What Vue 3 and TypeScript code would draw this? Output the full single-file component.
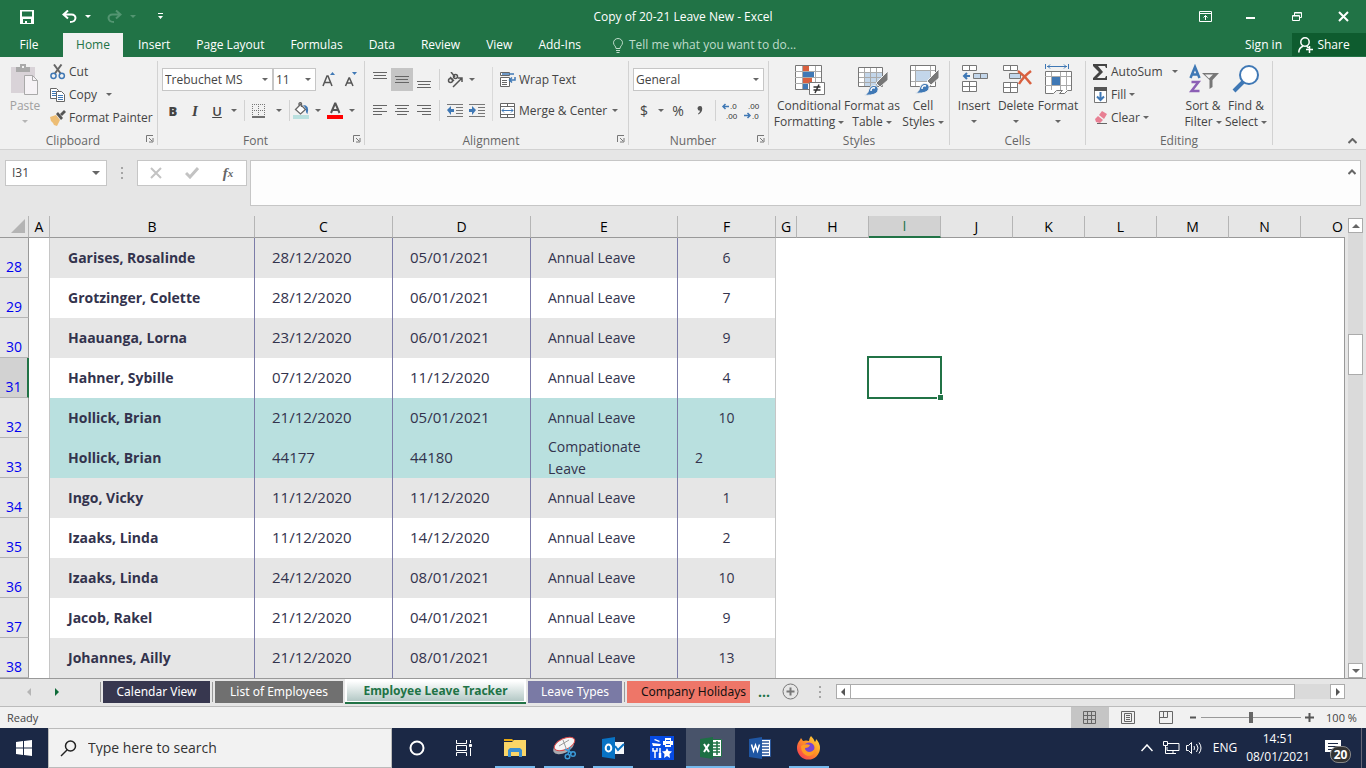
<script setup lang="ts">
import { ref } from 'vue'

interface LeaveRow {
  no: number
  name: string
  start: string
  end: string
  type: string
  days: string
  tone: 'grey' | 'white' | 'teal'
  daysLeft?: boolean
}

const rows: LeaveRow[] = [
  { no: 28, name: 'Garises, Rosalinde', start: '28/12/2020', end: '05/01/2021', type: 'Annual Leave', days: '6', tone: 'grey' },
  { no: 29, name: 'Grotzinger, Colette', start: '28/12/2020', end: '06/01/2021', type: 'Annual Leave', days: '7', tone: 'white' },
  { no: 30, name: 'Haauanga, Lorna', start: '23/12/2020', end: '06/01/2021', type: 'Annual Leave', days: '9', tone: 'grey' },
  { no: 31, name: 'Hahner, Sybille', start: '07/12/2020', end: '11/12/2020', type: 'Annual Leave', days: '4', tone: 'white' },
  { no: 32, name: 'Hollick, Brian', start: '21/12/2020', end: '05/01/2021', type: 'Annual Leave', days: '10', tone: 'teal' },
  { no: 33, name: 'Hollick, Brian', start: '44177', end: '44180', type: 'Compationate Leave', days: '2', tone: 'teal', daysLeft: true },
  { no: 34, name: 'Ingo, Vicky', start: '11/12/2020', end: '11/12/2020', type: 'Annual Leave', days: '1', tone: 'grey' },
  { no: 35, name: 'Izaaks, Linda', start: '11/12/2020', end: '14/12/2020', type: 'Annual Leave', days: '2', tone: 'white' },
  { no: 36, name: 'Izaaks, Linda', start: '24/12/2020', end: '08/01/2021', type: 'Annual Leave', days: '10', tone: 'grey' },
  { no: 37, name: 'Jacob, Rakel', start: '21/12/2020', end: '04/01/2021', type: 'Annual Leave', days: '9', tone: 'white' },
  { no: 38, name: 'Johannes, Ailly', start: '21/12/2020', end: '08/01/2021', type: 'Annual Leave', days: '13', tone: 'grey' },
]

const columns = ['A', 'B', 'C', 'D', 'E', 'F', 'G', 'H', 'I', 'J', 'K', 'L', 'M', 'N', 'O']
const emptyColumns = ['G', 'H', 'I', 'J', 'K', 'L', 'M', 'N', 'O']
const menuTabs = ['Insert', 'Page Layout', 'Formulas', 'Data', 'Review', 'View', 'Add-Ins']

const cellName = ref('I31')
const formula = ref('')
const fontName = ref('Trebuchet MS')
const fontSize = ref('11')
const numberFormat = ref('General')
const zoom = ref(50)
const query = ref('')
</script>

<template>
  <div class="app">
    <header class="title-bar">
      <div class="quick">
        <button class="q-save" aria-label="Save">
          <svg width="14" height="14" viewBox="0 0 14 14"><path fill="#fff" fill-rule="evenodd" d="M0 0h14v14H0zM2 1.500v5h10v-5zM3 9v4h2v-2h2v2h4V9z" /></svg>
        </button>
        <button class="q-undo" aria-label="Undo">
          <svg width="15" height="13" viewBox="0 0 15 13" fill="none" stroke="#fff" stroke-width="2"><path d="M6 0.500L1.500 4.500L6 8.500M2 4.500H9.500C15 4.500 15 12 8 12" /></svg>
        </button>
        <i class="caret light"></i>
        <button class="q-redo" aria-label="Redo">
          <svg width="15" height="13" viewBox="0 0 15 13" fill="none" stroke="#539571" stroke-width="2"><path d="M9 0.500L13.500 4.500L9 8.500M13 4.500H5.500C0 4.500 0 12 7 12" /></svg>
        </button>
        <i class="caret faded"></i>
        <button class="q-more" aria-label="Customize Quick Access Toolbar">
          <svg width="7" height="8" viewBox="0 0 7 8"><path fill="#fff" d="M1 0h5v1H1zM1 3h5L3.500 6z" /></svg>
        </button>
      </div>
      <h1>Copy of 20-21 Leave New - Excel</h1>
      <div class="window-controls">
        <button aria-label="Ribbon Display Options">
          <svg width="13" height="11" viewBox="0 0 13 11" fill="none" stroke="#fff"><path d="M.5.5h12v10H.5zM.5 2.500h12M6.500 9V4.500M4.500 6.500l2-2 2 2" /></svg>
        </button>
        <button aria-label="Minimize"><svg width="10" height="11" viewBox="0 0 10 11"><path fill="#fff" d="M0 6h9v2H0z" /></svg></button>
        <button aria-label="Restore">
          <svg width="11" height="11" viewBox="0 0 11 11" fill="none" stroke="#fff"><path d="M.5 4.500h7v5h-7zM.5 5h7M2.500 4V1.500h7v5H8M2.500 2h7" /></svg>
        </button>
        <button aria-label="Close"><svg width="11" height="11" viewBox="0 0 11 11"><path stroke="#fff" stroke-width="2" d="M1 1l9 9M10 1l-9 9" /></svg></button>
      </div>
    </header>

    <nav class="menu">
      <button class="file">File</button>
      <button class="home">Home</button>
      <button v-for="tab in menuTabs" :key="tab" class="menu-tab">{{ tab }}</button>
      <button class="tell">
        <svg width="12" height="15" viewBox="0 0 12 15" fill="none" stroke="#bfdccb"><path d="M4 10.500C4 8 1.500 7.500 1.500 4.800a4.500 4.300 0 0 1 9 0C10.500 7.500 8 8 8 10.500zM4 12.500h4M4.500 14.500h3" /></svg>
        Tell me what you want to do...
      </button>
      <span class="spacer"></span>
      <button class="sign">Sign in</button>
      <button class="share">
        <svg width="15" height="16" viewBox="0 0 15 16" fill="none" stroke="#fff" stroke-width="1.500"><circle cx="7" cy="5" r="4.200" /><path d="M.8 15.500c0-3.500 2-5.500 4.500-6.500M8.500 9l2 2M8 12.500h7M11.500 9v7" /></svg>
        Share
      </button>
    </nav>

    <section class="ribbon">
      <div class="group g-clipboard">
        <div class="body">
          <button class="big paste">
            <svg width="30" height="32" viewBox="0 0 30 32"><path fill="#d9d3d8" d="M1 3h24v26H1z" /><path fill="#a9a9a9" d="M6 3h4V0h6v3h4v5H6z" /><path fill="#f1f1f1" d="M12 2h2v2h-2z" /><path fill="#f6f3f6" stroke="#a9a9a9" d="M14.500 11.500h8l5 5v14h-13z" /><path fill="none" stroke="#a9a9a9" d="M22.500 11.500v5h5" /></svg>
            <span>Paste</span><i class="caret pale"></i>
          </button>
          <div class="stack">
            <button>
              <svg width="16" height="16" viewBox="0 0 16 16" fill="none"><path stroke="#666" stroke-width="2" d="M4 0.500l7 9.500M11.500 0.500l-7 9.500" /><circle cx="3.500" cy="11.800" r="2.600" stroke="#3f78b5" stroke-width="1.500" /><circle cx="11.800" cy="11.800" r="2.600" stroke="#3f78b5" stroke-width="1.500" /></svg>Cut
            </button>
            <button>
              <svg width="16" height="16" viewBox="0 0 16 16" fill="#fff" stroke="#666"><path d="M.5 1.500h6l2 2v8h-8z" /><path stroke="#3f78b5" d="M2 4.500h4M2 6.500h4M2 8.500h4" /><path d="M6.500 4.500h5l3 3v7h-8z" /><path stroke="#3f78b5" d="M8 8.500h5M8 10.500h5M8 12.500h5" /></svg>Copy<i class="caret wide"></i>
            </button>
            <button>
              <svg width="16" height="16" viewBox="0 0 16 16"><path fill="#edbd74" d="M0 7l6-2 4 5-3 6-3-1-1-2-2-2z" /><path fill="#555" d="M6 4l2-2 5 6-2 2zM10 4l4-4 2 2-4 4z" /></svg>Format Painter
            </button>
          </div>
        </div>
        <footer><span>Clipboard</span><button class="launch" aria-label="Clipboard settings"><svg viewBox="0 0 8 8"><path d="M.5 7V.5H7M3 3l3 3M7 3v4H3" /></svg></button></footer>
      </div>

      <div class="group g-font">
        <div class="body lines">
          <div class="line">
            <label class="pick font-name"><select v-model="fontName" aria-label="Font"><option>Trebuchet MS</option></select><i class="caret"></i></label>
            <label class="pick font-size"><select v-model="fontSize" aria-label="Font size"><option>11</option></select><i class="caret"></i></label>
            <button class="w22" aria-label="Increase font size"><svg width="14" height="16" viewBox="0 0 14 16"><path fill="none" stroke="#555" stroke-width="1.500" d="M1 14L5 4h1l4 10M2.500 10.500h6" /><path fill="#3f78b5" d="M8 3h5l-2.500-3z" /></svg></button>
            <button class="w22" aria-label="Decrease font size"><svg width="14" height="16" viewBox="0 0 14 16"><path fill="none" stroke="#555" stroke-width="1.500" d="M1.500 14L5 6h.5L9 14M3 11h5" /><path fill="#3f78b5" d="M8 0h5l-2.500 3z" /></svg></button>
          </div>
          <div class="line">
            <button class="w22 glyph"><b>B</b></button>
            <button class="w22 glyph serif"><i>I</i></button>
            <button class="w22 glyph"><u>U</u></button>
            <button class="w12" aria-label="Underline options"><i class="caret"></i></button>
            <span class="sep"></span>
            <button class="w28" aria-label="Borders"><svg width="14" height="14" viewBox="0 0 14 14" fill="none" stroke="#777"><path stroke-dasharray="1 1" d="M0 .5h13M0 6.500h13M.5 0v12M6.500 0v12M12.500 0v12" /><path stroke="#444" d="M0 13h13" stroke-width="1.500" /></svg></button>
            <button class="w12 tight" aria-label="Border options"><i class="caret"></i></button>
            <span class="sep"></span>
            <button class="w22 fill" aria-label="Fill colour"><svg width="17" height="17" viewBox="0 0 17 17"><path fill="#fff" stroke="#666" stroke-width="1.300" d="M7.500 2.500l5 5-5 4.500-5-4.500zM6 5V1.500Q7.500-.5 8.500 1.500V5" /><path fill="#3f78b5" d="M10 3q7 0 4.500 9-2-1-1.500-5-1-2-3-4z" /><path fill="#b9e0df" d="M0 13h16v4H0z" /></svg></button>
            <button class="w12" aria-label="Fill colour options"><i class="caret"></i></button>
            <button class="w22" aria-label="Font colour"><svg width="17" height="17" viewBox="0 0 17 17"><path fill="none" stroke="#555" stroke-width="2" d="M4 11L8 1.500h.5l4 9.500M5.500 8h5.500" /><path fill="#f00" d="M0 13h16v4H0z" /></svg></button>
            <button class="w12" aria-label="Font colour options"><i class="caret"></i></button>
          </div>
        </div>
        <footer><span>Font</span><button class="launch" aria-label="Font settings"><svg viewBox="0 0 8 8"><path d="M.5 7V.5H7M3 3l3 3M7 3v4H3" /></svg></button></footer>
      </div>

      <div class="group g-align">
        <div class="body">
          <div class="lines">
            <div class="line">
              <button class="w22" aria-label="Top align"><svg class="al" viewBox="0 0 14 20"><path d="M0 2.500h14M1 5.500h12M0 8.500h14" /></svg></button>
              <button class="w22 on" aria-label="Middle align"><svg class="al" viewBox="0 0 14 20"><path d="M0 6.500h14M1 9.500h12M0 12.500h14" /></svg></button>
              <button class="w22" aria-label="Bottom align"><svg class="al" viewBox="0 0 14 20"><path d="M0 11.500h14M1 14.500h12M0 17.500h14" /></svg></button>
              <span class="sep"></span>
              <button class="w22" aria-label="Orientation"><svg width="17" height="16" viewBox="0 0 17 16" fill="none" stroke="#555" stroke-width="1.500"><path d="M6 15L15 6M11 6h4v4" /><circle cx="3.500" cy="8.500" r="2" /><path d="M3 5l4 4" /><circle cx="8.500" cy="4.500" r="2" /><path d="M4 0l4 5" /></svg></button>
              <button class="w12" aria-label="Orientation options"><i class="caret"></i></button>
            </div>
            <div class="line">
              <button class="w22" aria-label="Align left"><svg class="al" viewBox="0 0 14 20"><path d="M0 4.500h14M0 7.500h9M0 10.500h14M0 13.500h9" /></svg></button>
              <button class="w22" aria-label="Center"><svg class="al" viewBox="0 0 14 20"><path d="M0 4.500h14M2 7.500h10M0 10.500h14M2 13.500h10" /></svg></button>
              <button class="w22" aria-label="Align right"><svg class="al" viewBox="0 0 14 20"><path d="M0 4.500h14M5 7.500h9M0 10.500h14M5 13.500h9" /></svg></button>
              <span class="sep"></span>
              <button class="w22" aria-label="Decrease indent"><svg width="16" height="14" viewBox="0 0 16 14"><path stroke="#777" d="M0 .5h16M9 3.500h7M9 6.500h7M9 9.500h7M0 12.500h16" /><path fill="#3f78b5" d="M0 6l4-4v3h3v3H4v3z" /></svg></button>
              <button class="w22" aria-label="Increase indent"><svg width="16" height="14" viewBox="0 0 16 14"><path stroke="#777" d="M0 .5h16M9 3.500h7M9 6.500h7M9 9.500h7M0 12.500h16" /><path fill="#3f78b5" d="M7 6L3 2v3H0v3h3v3z" /></svg></button>
            </div>
          </div>
          <span class="tall-sep"></span>
          <div class="lines texts">
            <button class="line">
              <svg width="16" height="16" viewBox="0 0 16 16" fill="#fff" stroke="#666"><path d="M.5.5h9v3h-9zM.5 5.500h9v9h-9zM2 8.500h5M2 10.500h5M2 12.500h5" /><path fill="none" stroke="#3f78b5" stroke-width="1.500" d="M2 2h12M15 5v3H10M12 5.500L9.500 8l2.500 2.500" /></svg>Wrap Text
            </button>
            <button class="line">
              <svg width="16" height="16" viewBox="0 0 16 16" fill="#fff" stroke="#666"><path d="M.5.5h14v14H.5zM.5 3.500h14M.5 11.500h14M7.500 .5v3M7.500 11.500v3" /><path stroke="#3f78b5" d="M2 7.500h11M4 5.500l-2 2 2 2M11 5.500l2 2-2 2" /></svg>Merge &amp; Center<i class="caret snug"></i>
            </button>
          </div>
        </div>
        <footer><span>Alignment</span><button class="launch" aria-label="Alignment settings"><svg viewBox="0 0 8 8"><path d="M.5 7V.5H7M3 3l3 3M7 3v4H3" /></svg></button></footer>
      </div>

      <div class="group g-number">
        <div class="body lines">
          <div class="line"><label class="pick number-format"><select v-model="numberFormat" aria-label="Number format"><option>General</option></select><i class="caret"></i></label></div>
          <div class="line">
            <button class="w22 money">$</button>
            <button class="w12" aria-label="Currency options"><i class="caret"></i></button>
            <button class="w22 percent">%</button>
            <button class="w22" aria-label="Comma style"><svg width="6" height="9" viewBox="0 0 6 9"><path fill="#555" d="M.5 2.500a2.300 2.300 0 0 1 4.700-.3Q5.500 6 1.500 8.500L1 7.800Q3 6.500 3 4.800 .6 4.800.5 2.500z" /></svg></button>
            <span class="sep sep-num"></span>
            <button class="w22 dec" aria-label="Increase decimal"><svg width="18" height="21" viewBox="0 0 18 21"><path fill="none" stroke="#3f78b5" stroke-width="1.500" d="M2 6.500h6M4.500 4L2 6.500 4.500 9" /><text x="9" y="9">.0</text><text x="5" y="19">.00</text></svg></button>
            <button class="w22 dec" aria-label="Decrease decimal"><svg width="18" height="21" viewBox="0 0 18 21"><path fill="none" stroke="#3f78b5" stroke-width="1.500" d="M1 15.500h6M4.500 13L7 15.500 4.500 18" /><text x="5" y="9">.00</text><text x="9" y="19">.0</text></svg></button>
          </div>
        </div>
        <footer><span>Number</span><button class="launch" aria-label="Number settings"><svg viewBox="0 0 8 8"><path d="M.5 7V.5H7M3 3l3 3M7 3v4H3" /></svg></button></footer>
      </div>

      <div class="group g-styles">
        <div class="body">
          <button class="big w70">
            <svg width="32" height="32" viewBox="0 0 32 32"><path fill="#fff" stroke="#777" d="M2.500 1.500h26v24h-26z" /><path stroke="#aaa" d="M2 7.500h26M2 13.500h26M2 19.500h26M9.500 2v23M22.500 2v23" /><path fill="#d9603f" d="M10 2h6v5h-6zM10 14h9v5h-9z" /><path fill="#3f78b5" d="M10 8h11v5H10zM10 20h5v5h-5z" /><path fill="#fff" stroke="#777" d="M16.500 18.500h15v12h-15z" /><path stroke="#333" stroke-width="1.500" d="M20.500 23h7M20.500 26h7M26 20.500L22 29" /></svg>
            <span>Conditional<br />Formatting<i class="caret inl"></i></span>
          </button>
          <button class="big w54">
            <svg width="32" height="32" viewBox="0 0 32 32"><path fill="#fff" stroke="#777" d="M2.500 3.500h24v19h-24z" /><path fill="#c3d6ea" d="M9 9h17v13H9z" /><path stroke="#aaa" d="M3 8.500h23M3 13.500h23M3 18.500h23M8.500 4v18M14.500 4v18M20.500 4v18" /><path fill="#777" stroke="#f1f1f1" d="M32 7v9l-8 7-4-4z" /><path fill="#3f78b5" stroke="#f1f1f1" d="M8 31c4-1 4-3 5-6 2-5 8-4 9-1 1 5-4 8-14 7z" /><path fill="none" stroke="#fff" stroke-width="1.500" d="M15 27q0-4 4-3" /></svg>
            <span>Format as<br />Table<i class="caret inl"></i></span>
          </button>
          <button class="big w46">
            <svg width="32" height="32" viewBox="0 0 32 32"><path fill="#fff" stroke="#777" d="M3.500 1.500h25v21h-25z" /><path stroke="#aaa" d="M4 6.500h24M4 17.500h24M8.500 2v20M23.500 2v20" /><path fill="#c3d6ea" d="M9 7h14v10H9z" /><path fill="#777" stroke="#f1f1f1" d="M32 5v9l-8 7-4-4z" /><path fill="#3f78b5" stroke="#f1f1f1" d="M8 29c4-1 4-3 5-6 2-5 8-4 9-1 1 5-4 8-14 7z" /><path fill="none" stroke="#fff" stroke-width="1.500" d="M15 25q0-4 4-3" /></svg>
            <span>Cell<br />Styles<i class="caret inl"></i></span>
          </button>
        </div>
        <footer><span>Styles</span></footer>
      </div>

      <div class="group g-cells">
        <div class="body">
          <button class="big w42">
            <svg width="32" height="32" viewBox="0 0 32 32" stroke="#777" fill="#fff"><path d="M4.500 1.500h14v5h-14zM11.500 1.500v5M4.500 17.500h14v10h-14zM4.500 22.500h14M11.500 17.500v10" /><path fill="#c3d6ea" d="M15.500 9.500h14v5h-14zM22.500 9.500v5" /><path fill="none" stroke="#3f78b5" stroke-width="2" d="M6 12h6M9 9l-3 3 3 3" /></svg>
            <span>Insert</span><i class="caret"></i>
          </button>
          <button class="big w42">
            <svg width="32" height="32" viewBox="0 0 32 32" stroke="#777" fill="#fff"><path d="M3.500 1.500h14v5h-14zM10.500 1.500v5M3.500 18.500h14v10h-14zM3.500 23.500h14M10.500 18.500v10" /><path fill="#c3d6ea" d="M9.500 9.500h11v5h-11z" /><path fill="none" stroke="#d9603f" stroke-width="2.500" d="M18 7q7 5 13 13M31 7Q23 13 19 20" /></svg>
            <span>Delete</span><i class="caret"></i>
          </button>
          <button class="big w42">
            <svg width="32" height="32" viewBox="0 0 32 32" fill="#fff" stroke="#777"><path d="M3.500 7.500h26v19l-4 0-3 3h-5l3-3h-6l-3 3h-8z" /><path stroke="#aaa" d="M3 12.500h26M3 21.500h26M9.500 8v18M18.500 8v18M24.500 8v18" /><path fill="#3f78b5" stroke="none" d="M10 13h8v8h-8z" /><path fill="none" stroke="#3f78b5" d="M3.500 0v5M26.500 0v5M5 2.500h20M8 .5l-2 2 2 2M22 .5l2 2-2 2" /></svg>
            <span>Format</span><i class="caret"></i>
          </button>
        </div>
        <footer><span>Cells</span></footer>
      </div>

      <div class="group g-edit">
        <div class="body">
          <div class="stack">
            <button><svg width="16" height="16" viewBox="0 0 16 16"><path fill="#444" d="M1 0h14v4h-1l-1-2H6l5 6-6 6h8l1-2h1v4H1v-2l6-6-6-6z" /></svg>AutoSum<i class="caret wide"></i></button>
            <button><svg width="16" height="16" viewBox="0 0 16 16"><path fill="#fff" stroke="#777" d="M2.500.5h12v15h-12z" /><path fill="#555" d="M2 0h13v4H2z" /><path fill="none" stroke="#3f78b5" stroke-width="2" d="M8.500 5v8M5 9.500L8.500 13 12 9.500" /></svg>Fill<i class="caret"></i></button>
            <button><svg width="16" height="16" viewBox="0 0 16 16"><path fill="#e87f93" d="M10 1l5 3-3 5-5-4zM6 6l5 4-3 3-4-1-1-3z" /><path fill="none" stroke="#666" d="M5 13.500h10" /></svg>Clear<i class="caret"></i></button>
          </div>
          <button class="big w42">
            <svg width="32" height="32" viewBox="0 0 32 32" fill="none"><path stroke="#3f78b5" stroke-width="2.500" d="M3.500 14L8 3l4.500 11M5 10.500h6" /><path stroke="#8c5fb5" stroke-width="2.500" d="M4.500 18h7l-7 9h8" /><path fill="#777" d="M15 9h17l-6.500 7v7l-3 2v-9z" /><path fill="#f1f1f1" d="M18 10.500h8l-4 4z" /></svg>
            <span>Sort &amp;<br />Filter<i class="caret inl"></i></span>
          </button>
          <button class="big w44">
            <svg width="32" height="32" viewBox="0 0 32 32"><path stroke="#3f78b5" stroke-width="4" d="M4 27l9-9" /><circle cx="19" cy="11" r="9" fill="#fff" stroke="#3f78b5" stroke-width="2" /></svg>
            <span>Find &amp;<br />Select<i class="caret inl"></i></span>
          </button>
        </div>
        <footer><span>Editing</span></footer>
      </div>
      <button class="collapse" aria-label="Collapse the ribbon"><svg width="9" height="6" viewBox="0 0 9 6"><path fill="none" stroke="#666" stroke-width="2" d="M.5 5l4-4 4 4" /></svg></button>
    </section>

    <section class="formula-row">
      <div class="name-box"><input v-model="cellName" aria-label="Name box" /><button aria-label="Named ranges"><i class="caret big-caret"></i></button></div>
      <span class="grip"></span>
      <div class="fx-box">
        <button aria-label="Cancel"><svg width="12" height="12" viewBox="0 0 12 12"><path stroke="#c3c3c3" stroke-width="2" d="M1 1l10 10M11 1L1 11" /></svg></button>
        <button aria-label="Enter"><svg width="14" height="12" viewBox="0 0 14 12"><path fill="none" stroke="#c3c3c3" stroke-width="3" d="M1 6l4 4 8-9" /></svg></button>
        <button class="fx" aria-label="Insert function"><i>f</i><small>x</small></button>
      </div>
      <div class="formula">
        <textarea v-model="formula" aria-label="Formula bar"></textarea>
        <button aria-label="Collapse formula bar"><svg width="8" height="6" viewBox="0 0 8 6"><path fill="none" stroke="#666" stroke-width="2" d="M.5 5L4 1.500 7.500 5" /></svg></button>
      </div>
    </section>

    <main class="sheet">
      <div class="grid-wrap">
        <table>
          <colgroup>
            <col class="c-head" /><col class="c-narrow" /><col class="c-name" /><col class="c-date" /><col class="c-date" /><col class="c-type" /><col class="c-days" /><col class="c-narrow" />
            <col v-for="n in 7" :key="n" class="c-std" /><col />
          </colgroup>
          <thead>
            <tr>
              <th class="corner"><svg width="14" height="14" viewBox="0 0 14 14"><path fill="#b4b4b4" d="M14 0v14H0z" /></svg></th>
              <th v-for="c in columns" :key="c" scope="col" :class="{ active: c === 'I', last: c === 'O' }">{{ c }}</th>
            </tr>
          </thead>
          <tbody>
            <tr v-for="row in rows" :key="row.no" :class="row.tone">
              <th scope="row" :class="{ active: row.no === 31 }">{{ row.no }}</th>
              <td class="gap"></td>
              <td class="fill-cell name">{{ row.name }}</td>
              <td class="fill-cell date">{{ row.start }}</td>
              <td class="fill-cell date">{{ row.end }}</td>
              <td class="fill-cell type"><span>{{ row.type }}</span></td>
              <td class="fill-cell days" :class="{ left: row.daysLeft }">{{ row.days }}</td>
              <td v-for="c in emptyColumns" :key="c"><span v-if="row.no === 31 && c === 'I'" class="selection"></span></td>
            </tr>
          </tbody>
        </table>
      </div>
      <div class="v-scroll">
        <button aria-label="Scroll up"><i class="tri up"></i></button>
        <div class="track"><span class="thumb"></span></div>
        <button aria-label="Scroll down"><i class="tri down"></i></button>
      </div>
    </main>

    <nav class="sheet-tabs">
      <div class="sheet-nav"><button aria-label="Previous sheets"><i class="tri prev"></i></button><button aria-label="Next sheets"><i class="tri next"></i></button></div>
      <button class="tab navy">Calendar View</button>
      <span class="tab-line"></span>
      <button class="tab grey-tab">List of Employees</button>
      <button class="tab current"><span>Employee Leave Tracker</span></button>
      <button class="tab violet">Leave Types</button>
      <span class="tab-line"></span>
      <button class="tab coral">Company Holidays</button>
      <button class="dots">...</button>
      <button class="add" aria-label="New sheet"><svg width="17" height="17" viewBox="0 0 17 17" fill="none" stroke="#777"><circle cx="8.500" cy="8.500" r="7.500" /><path stroke-width="2" d="M4.500 8.500h8M8.500 4.500v8" /></svg></button>
      <span class="grip"></span>
      <div class="h-scroll">
        <button aria-label="Scroll left"><i class="tri prev dark"></i></button>
        <span class="h-thumb"></span><span class="h-track"></span>
        <button aria-label="Scroll right"><i class="tri next dark"></i></button>
      </div>
    </nav>

    <footer class="status">
      <span>Ready</span>
      <span class="spacer"></span>
      <button class="view on" aria-label="Normal view"><svg width="14" height="13" viewBox="0 0 14 13" fill="none" stroke="#666"><path d="M.5.5h12v12H.5zM.5 4.500h12M.5 8.500h12M4.500.5v12M8.500.5v12" /></svg></button>
      <button class="view" aria-label="Page layout view"><svg width="14" height="13" viewBox="0 0 14 13" fill="none" stroke="#666"><path d="M.5.5h13v12H.5zM3.500 2.500h7v8h-7zM5 4.500h4M5 6.500h4M5 8.500h4" /></svg></button>
      <button class="view" aria-label="Page break view"><svg width="14" height="13" viewBox="0 0 14 13" fill="none" stroke="#666"><path d="M.5.5h13v12H.5zM.5 6.500h8v-6M4.500.5v6" /></svg></button>
      <button class="zoom-btn" aria-label="Zoom out"><svg width="9" height="9" viewBox="0 0 9 9"><path stroke="#555" stroke-width="2" d="M1 4.500h6" /></svg></button>
      <input v-model="zoom" type="range" min="0" max="100" aria-label="Zoom" />
      <button class="zoom-btn" aria-label="Zoom in"><svg width="9" height="9" viewBox="0 0 9 9"><path stroke="#555" stroke-width="2" d="M0 4.500h9M4.500 0v9" /></svg></button>
      <button class="percent-text">100 %</button>
    </footer>

    <footer class="taskbar">
      <button class="start" aria-label="Start"><svg width="16" height="16" viewBox="0 0 16 16"><path fill="#fff" d="M0 2l7-1v6.500H0zM8 1l8-1v7.500H8zM0 8.500h7V15l-7-1zM8 8.500h8V16l-8-1z" /></svg></button>
      <label class="search">
        <svg width="17" height="17" viewBox="0 0 17 17" fill="none" stroke="#222" stroke-width="1.500"><circle cx="10.500" cy="6" r="5" /><path d="M7 10L1 16" /></svg>
        <input v-model="query" placeholder="Type here to search" aria-label="Type here to search" />
      </label>
      <button class="app-btn" aria-label="Cortana"><svg width="16" height="16" viewBox="0 0 16 16"><circle cx="8" cy="8" r="6.500" fill="none" stroke="#fff" stroke-width="2" /></svg></button>
      <button class="app-btn task-view" aria-label="Task view"><svg width="18" height="16" viewBox="0 0 18 16" fill="none" stroke="#fff"><path d="M1.500 0v3.500h10V0M1.500 5.500h10v5h-10zM1.500 16v-3.500h10V16M15.500 0v3M15.500 8v8" /><path fill="#fff" d="M14.500 4.500h2v2h-2z" /></svg></button>
      <button class="app-btn open" aria-label="File Explorer"><svg width="24" height="22" viewBox="0 0 24 22"><path fill="#e8a911" d="M1 2h8l2 2H1z" /><path fill="#fbd667" d="M1 5h8l2-2h12v16H1z" /><path fill="#3c8fd0" d="M5 13l2-2h10l2 2v7h-3v-5H8v5H5z" /></svg></button>
      <button class="app-btn open" aria-label="Snipping Tool"><svg width="24" height="24" viewBox="0 0 24 24"><ellipse cx="11.500" cy="11" rx="11" ry="6" transform="rotate(-25 11.500 11)" fill="#a9aab0" /><ellipse cx="12.500" cy="8" rx="11" ry="5.500" transform="rotate(-25 12.500 8)" fill="#f6f6f6" stroke="#d94b4b" /><path stroke="#999" d="M7 10l10-6M11 4l3 8" /><g fill="none" stroke="#3b9ad8" stroke-width="1.500"><path d="M13 13l7 4M18 11l-2 7" /><circle cx="15.500" cy="20.500" r="2.300" /><circle cx="21" cy="18" r="2.300" /></g></svg></button>
      <button class="app-btn open" aria-label="Outlook"><svg width="24" height="24" viewBox="0 0 24 24"><path fill="#0873c5" d="M1 3l13-2v22L1 21z" /><path fill="#f5f8fb" d="M14 6h9v12h-9z" /><path fill="none" stroke="#0873c5" stroke-width="2" d="M14 10l3 4 6-6" /><ellipse cx="7.500" cy="12" rx="2.800" ry="3.500" fill="none" stroke="#fff" stroke-width="2" /></svg></button>
      <button class="app-btn" aria-label="Utilities"><svg width="24" height="24" viewBox="0 0 24 24"><path fill="#064be5" d="M0 0h24v24H0z" /><g fill="#fff"><path d="M2 7l9 1-1 2H3zM5 3l5 2-1 1-5-2zM15 2h6v3h2v4h-2v2h-6V9h-2V5h2zM17 12l1.500 3 3.500.5-2.500 2.500.5 4-3-2-3 2 .5-4-2.500-2.500 3.500-.5z" /></g><g fill="none" stroke="#fff" stroke-width="1.500"><path d="M5 15v7M3 12v3h4v-3M10 12v5" /><path stroke-width="2.500" d="M10 17v5" /></g><path stroke="#064be5" d="M16 4.500h4M16 8.500h4" /></svg></button>
      <button class="app-btn selected" aria-label="Excel"><svg width="24" height="24" viewBox="0 0 24 24"><path fill="#fff" stroke="#217346" d="M12.500 3.500h10v17h-10z" /><path stroke="#217346" stroke-width="1.500" d="M14 7h7M14 10h7M14 13h7M14 16h7M18 5v14" /><path fill="#1d7044" d="M1 3l13-2v22L1 21z" /><path stroke="#fff" stroke-width="2" d="M5 8l5 8M10 8l-5 8" /></svg></button>
      <button class="app-btn" aria-label="Word"><svg width="24" height="24" viewBox="0 0 24 24"><path fill="#fff" stroke="#2b579a" d="M12.500 3.500h10v17h-10z" /><path stroke="#2b579a" stroke-width="1.500" d="M14 6h7M14 9h7M14 12h7M14 15h7M14 18h7" /><path fill="#1f56a3" d="M1 3l13-2v22L1 21z" /><path fill="none" stroke="#fff" stroke-width="1.500" d="M3.500 8.500L5.500 15l2-6 2 6 2-6.500" /></svg></button>
      <button class="app-btn open" aria-label="Firefox"><svg width="24" height="24" viewBox="0 0 24 24"><defs><linearGradient id="fox" x1="1" y1="0" x2="0" y2="1"><stop offset="0" stop-color="#ffe23f" /><stop offset=".45" stop-color="#ff9425" /><stop offset="1" stop-color="#f62c5c" /></linearGradient></defs><path fill="url(#fox)" d="M14 0q3 3 4 6 1-1 1-3 4 4 4 9a11.500 11.500 0 0 1-23 0Q0 7 3 4l1-2 2 3q3-1 6 0 0-3 2-5z" /><circle cx="12" cy="12" r="5.500" fill="#7845d1" /><path fill="#ff9a25" d="M4 10q4-3 9-1-1 3-5 3 0 3 4 4 4 0 6-4 0 8-7 8-7-2-7-10z" /></svg></button>
      <span class="spacer"></span>
      <button class="tray t-chev" aria-label="Show hidden icons"><svg width="12" height="8" viewBox="0 0 12 8"><path fill="none" stroke="#fff" stroke-width="1.500" d="M.5 7L6 1l5.500 6" /></svg></button>
      <button class="tray t-net" aria-label="Network"><svg width="17" height="14" viewBox="0 0 17 14" fill="none" stroke="#fff"><path d="M5 2.500h11v7H4V6M.5.500h4v4h-4zM2.500 4.500v8H9M10 10v3M6 12.500h7" /></svg></button>
      <button class="tray t-vol" aria-label="Volume"><svg width="17" height="14" viewBox="0 0 17 14" fill="none" stroke="#fff"><path d="M.5 4.500h2l3-3v11l-3-3h-2zM8 5q1 2 0 4M10.500 3q3 4 0 8M13 1.500q4 5.500 0 11" /></svg></button>
      <button class="tray lang">ENG</button>
      <div class="clock"><time>14:51</time><time>08/01/2021</time></div>
      <button class="note" aria-label="Notifications"><svg width="16" height="16" viewBox="0 0 16 16"><path fill="#fff" d="M0 0h16v12H9l-4 4v-4H0z" /><path stroke="#1b2845" d="M3 3.500h10M3 6.500h10M3 9.500h7" /></svg><span class="badge">20</span></button>
      <span class="desk"></span>
    </footer>
  </div>
</template>

<style>
body { background: #e6e6e6; }
</style>

<style scoped>
* { box-sizing: border-box; }
.app { display: flex; flex-direction: column; min-height: 100vh; font: 12px/16px "Open Sans", "Noto Sans", sans-serif; color: #444; background: #e6e6e6; overflow: hidden; }
button, input, select, textarea { font: inherit; color: inherit; border: 0; background: none; padding: 0; margin: 0; outline: 0; border-radius: 0; }
button { display: flex; align-items: center; justify-content: center; white-space: nowrap; }
svg { display: block; flex: none; }
.spacer { flex: 1; }
.caret { flex: none; display: inline-block; border: 3px solid transparent; border-top-color: #666; border-bottom: 0; }
.caret.light { border-top-color: #fff; }
.caret.faded { border-top-color: #539571; }
.caret.pale { border-top-color: #b5b5b5; }
.caret.wide { margin-left: 6px; }
.caret.snug { margin-left: 2px; }
.caret.inl { margin-left: 3px; vertical-align: middle; }
.caret.big-caret { border-width: 4px 4px 0; }

.title-bar { display: grid; grid-template-columns: 1fr auto 1fr; align-items: center; height: 33px; background: #217346; color: #fff; }
.title-bar h1 { margin: 0; font-size: 12px; font-weight: 400; }
.quick { display: flex; align-items: center; padding-left: 20px; height: 30px; }
.q-undo { margin: 0 8px 0 28px; }
.q-redo { margin: 0 8px 0 16px; }
.q-more { margin-left: 21px; }
.window-controls { display: flex; justify-content: flex-end; height: 31px; }
.window-controls button { width: 46px; }

.menu { display: flex; align-items: stretch; height: 24px; background: #217346; color: #fff; }
.file { width: 58px; margin-right: 5px; }
.home { width: 60px; background: #f1f1f1; color: #217346; margin-right: 2px; }
.menu-tab { padding: 0 13px; }
.tell { margin-left: 18px; gap: 5px; color: #bfdccb; }
.sign { margin-right: 10px; }
.share { width: 74px; gap: 4px; background: #0e5c2f; padding-right: 10px; margin-bottom: 1px; }

.ribbon { display: flex; height: 93px; background: #f1f1f1; border-bottom: 1px solid #d2d2d2; padding: 4px 0 4px; }
.group { display: flex; flex-direction: column; flex: none; border-right: 1px solid #d2d2d2; }
.group .body { display: flex; flex: 1; }
.group footer { display: flex; align-items: center; height: 12px; color: #666; }
.group footer span { flex: 1; text-align: center; padding-top: 4px; }
.launch { width: 8px; margin-right: 3px; }
.launch svg { width: 8px; height: 8px; fill: none; stroke: #777; }
.g-clipboard { width: 158px; }
.g-font { width: 207px; }
.g-align { width: 264px; }
.g-number { width: 140px; }
.g-styles { width: 181px; }
.g-cells { width: 136px; }
.g-edit { width: 187px; }
.g-styles .body { padding-left: 5px; }
.g-cells .body { padding-left: 3px; }
.g-edit .body { padding-left: 6px; }
.big { flex-direction: column; justify-content: flex-start; padding-top: 3px; text-align: center; }
.big span { margin-top: 2px; }
.big > .caret { margin-top: 6px; }
.paste { width: 50px; color: #a0a0a0; }
.w12 { width: 12px; } .w22 { width: 22px; } .w28 { width: 28px; } .w42 { width: 42px; } .w44 { width: 44px; }
.w46 { width: 46px; } .w54 { width: 56px; } .w70 { width: 70px; }
.stack { display: flex; flex-direction: column; }
.stack button { height: 23px; gap: 3px; justify-content: flex-start; padding-bottom: 2px; }
.g-edit .stack { width: 90px; }
.lines { display: flex; flex-direction: column; gap: 8px; padding-top: 7px; }
.body.lines { flex-direction: column; padding-left: 4px; }
.line { display: flex; align-items: center; height: 23px; }
.line button { height: 23px; }
.pick { position: relative; display: flex; align-items: center; height: 23px; background: #fff; border: 1px solid #c6c6c6; }
.pick select { appearance: none; width: 100%; height: 21px; padding-left: 2px; }
.pick .caret { position: absolute; right: 4px; }
.font-name { width: 111px; }
.font-size { width: 43px; margin: 0 2px 0 0; }
.number-format { width: 131px; }
.glyph { font-size: 13px; font-weight: 600; }
.serif { font-family: "Liberation Serif", serif; font-weight: 700; font-size: 15px; }
.sep { width: 1px; height: 21px; background: #d2d2d2; margin: 0 5px; }
.g-font .sep { margin: 0 0 0 4px; }
.on { background: #c5c5c5; }
.al { width: 14px; height: 20px; fill: none; stroke: #666; }
.g-align .body { padding-left: 4px; }
.g-align .sep { margin: 0 4px; }
.tall-sep { width: 1px; height: 54px; margin: 6px 7px 0 4px; background: #d9d9d9; }
.texts .line { gap: 3px; justify-content: flex-start; }
.money, .percent { font-size: 14px; }
.sep.sep-num { margin: 0 3px 0 4px; }
.dec text { font: 8px "Liberation Sans", sans-serif; fill: #333; }
.collapse { margin-left: auto; width: 28px; align-self: flex-end; height: 8px; }

.formula-row { display: flex; height: 66px; padding: 10px 5px 10px; align-items: flex-start; }
.name-box { display: flex; width: 102px; height: 26px; background: #fff; border: 1px solid #c6c6c6; padding: 0 6px; }
.name-box input { flex: 1; min-width: 0; }
.grip { width: 2px; height: 12px; margin: 7px 14px 0; background: repeating-linear-gradient(#a5a5a5 0 2px, transparent 2px 5px); }
.fx-box { display: flex; width: 110px; height: 26px; background: #fff; border: 1px solid #c6c6c6; margin-right: 3px; }
.fx-box button { flex: 1; }
.fx { font: 700 15px/20px "Liberation Serif", serif; color: #666; }
.fx small { font-size: 11px; font-style: italic; }
.formula { display: flex; flex: 1; height: 46px; background: #fdfdfd; border: 1px solid #c6c6c6; }
.formula textarea { flex: 1; resize: none; height: 44px; }
.formula button { width: 16px; height: 22px; }

.sheet { display: flex; flex: 1; }
.grid-wrap { flex: 1; min-width: 0; overflow: hidden; }
table { width: 100%; table-layout: fixed; border-collapse: separate; border-spacing: 0; color: #33334d; font-size: 14px; line-height: 20px; }
.c-head { width: 29px; } .c-narrow { width: 21px; } .c-name { width: 205px; } .c-date { width: 138px; }
.c-type { width: 147px; } .c-days { width: 98px; } .c-std { width: 72px; }
th, td { padding: 0; }
thead th { height: 22px; font-weight: 400; color: #000; border-bottom: 1px solid #999; border-right: 1px solid #b5b5b5; line-height: 20px; }
thead th.active { background: #d2d2d2; color: #217346; border-bottom: 2px solid #217346; }
thead th.last { text-align: right; padding-right: 2px; border-right: 0; }
.corner svg { margin: 0 3px 2px auto; }
tbody th { height: 40px; font-weight: 400; color: #0000f0; vertical-align: bottom; border-right: 1px solid #999; border-bottom: 1px solid #b5b5b5; }
tbody th.active { background: #d2d2d2; border-right: 2px solid #217346; }
td { height: 40px; background: #fff; }
td.gap { border-right: 1px solid #c6c6c6; }
td:last-child { border-right: 1px solid #999; }
.fill-cell { padding: 0 17px; border-right: 1px solid #7c7ca8; vertical-align: middle; }
.fill-cell.name { font-weight: 700; padding-left: 18px; }
.fill-cell.date { font-size: 15px; padding-bottom: 2px; }
.fill-cell.days { text-align: center; border-right-color: #c6c6c6; }
.fill-cell.left { text-align: left; }
.type span { display: block; line-height: 22px; margin: -2px 0; }
.grey .fill-cell { background: #e6e6e6; }
.teal .fill-cell { background: #b9e0df; }
td:has(.selection) { position: relative; }
.selection { position: absolute; inset: -2px -1px -1px -2px; border: 2px solid #217346; }
.selection::after { content: ""; position: absolute; right: -3px; bottom: -3px; width: 5px; height: 5px; background: #217346; box-shadow: -1px -1px 0 #fff; }
.v-scroll { display: flex; flex-direction: column; width: 15px; margin: 2px 3px 0; }
.v-scroll button, .h-scroll button { flex: none; width: 15px; height: 15px; background: #fff; border: 1px solid #ababab; }
.track { flex: 1; background: #dadada; padding-top: 101px; }
.thumb { display: block; height: 41px; background: #fff; border: 1px solid #ababab; }
.tri { border: 4px solid transparent; }
.tri.up { border-width: 0 4px 4px; border-bottom-color: #666; }
.tri.down { border-width: 4px 4px 0; border-top-color: #666; }
.tri.prev { border-width: 4px 4px 4px 0; border-right-color: #b5b5b5; }
.tri.next { border-width: 4px 0 4px 4px; border-left-color: #0e6b39; }
.tri.prev.dark { border-right-color: #555; }
.tri.next.dark { border-left-color: #555; }

.sheet-tabs { display: flex; align-items: center; height: 29px; border-top: 1px solid #999; border-bottom: 1px solid #bbb; padding-bottom: 2px; }
.sheet-nav { display: flex; width: 101px; padding-left: 15px; border-right: 1px solid #999; height: 20px; }
.sheet-nav button { width: 28px; }
.tab { height: 22px; margin-left: 2px; flex: none; color: #fff; font-family: "Noto Sans", "Open Sans", sans-serif; }
.tab-line { width: 1px; height: 20px; margin-left: 2px; background: #999; }
.navy { width: 107px; background: #37374f; }
.grey-tab { width: 128px; background: #707070; }
.current { width: 181px; height: 25px; align-self: flex-start; color: #217346; font-weight: 700; background: #fff; border-bottom: 2px solid #217346; padding: 2px 2px 1px; }
.current span { flex: 1; align-self: stretch; display: flex; align-items: center; justify-content: center; background: linear-gradient(#fff, #b3c8c5); }
.violet { width: 94px; background: #7a7aa5; }
.coral { width: 123px; background: #ee7668; color: #111; padding-left: 10px; overflow: hidden; }
.dots { margin-left: 8px; color: #217346; font-weight: 700; font-size: 14px; }
.add { margin-left: 12px; }
.sheet-tabs .grip { margin: 0 15px 0 20px; }
.h-scroll { display: flex; flex: 1; height: 15px; margin-right: 21px; background: #dadada; }
.h-thumb { flex: 1; background: #fff; border: 1px solid #ababab; border-left: 0; }
.h-track { width: 35px; }

.status { display: flex; align-items: center; height: 21px; background: #f1f1f1; padding-left: 7px; font-size: 11px; }
.status .view { width: 38px; height: 21px; }
.zoom-btn { width: 16px; }
.status input { appearance: none; width: 100px; height: 14px; background: linear-gradient(#999, #999) center / 100% 1px no-repeat; }
.status input::-webkit-slider-thumb { appearance: none; width: 4px; height: 11px; background: #666; }
.percent-text { width: 49px; }

.taskbar { display: flex; align-items: stretch; height: 40px; background: #1b2845; color: #fff; }
.start { width: 48px; }
.search { display: flex; align-items: center; width: 344px; background: #f2f2f2; border: 1px solid #bbb; padding-left: 11px; gap: 11px; color: #333; font-size: 14px; }
.search input { flex: 1; }
.search input::placeholder { color: #333; opacity: 1; }
.app-btn { width: 49px; flex: none; position: relative; }
.task-view { padding-right: 4px; }
.open::after, .selected::after { content: ""; position: absolute; left: 5px; right: 4px; bottom: 0; height: 2px; background: #76b9ed; }
.selected { background: #48536a; }
.selected::after { left: 0; right: 0; }
.t-chev { width: 26px; } .t-net { width: 22px; } .t-vol { width: 25px; }
.lang { width: 36px; }
.clock { width: 70px; display: flex; flex-direction: column; justify-content: center; text-align: center; line-height: 18px; }
.note { width: 48px; position: relative; padding-right: 8px; }
.badge { position: absolute; left: 17px; bottom: 5px; width: 21px; height: 17px; border-radius: 8px; border: 1px solid #888; background: #333; font-weight: 700; text-align: center; line-height: 15px; }
.desk { width: 5px; border-left: 1px solid #667; }
</style>
